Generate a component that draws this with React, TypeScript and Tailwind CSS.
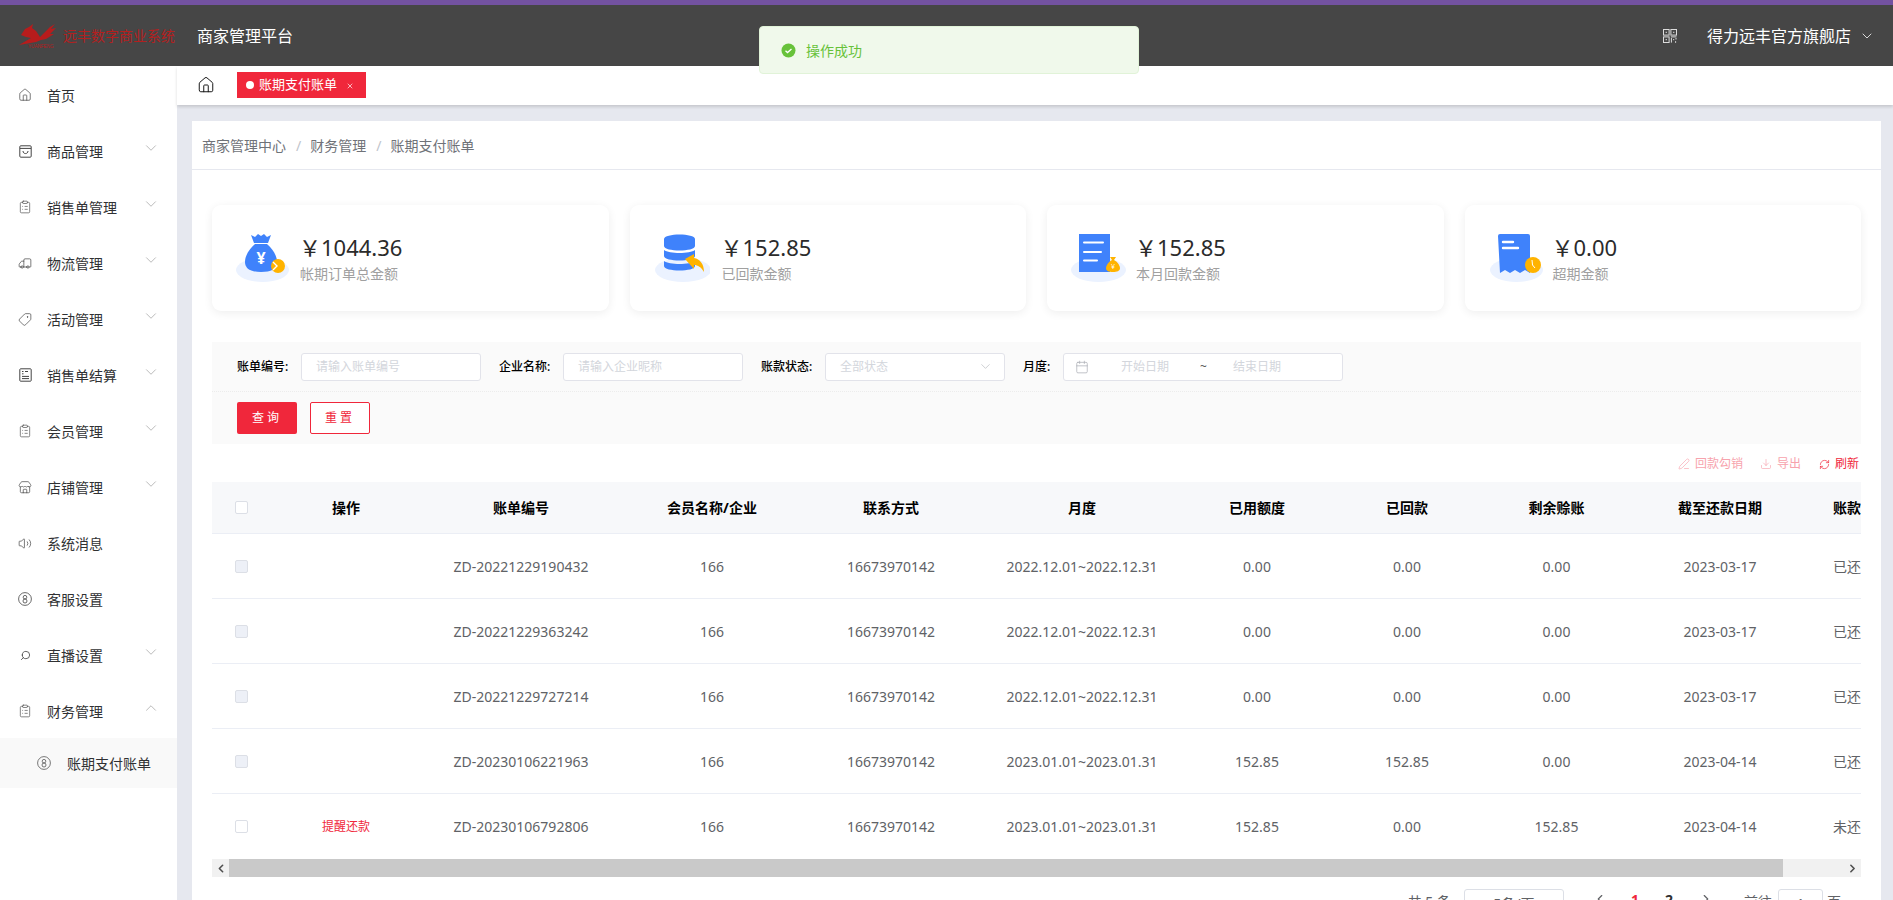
import { ReactNode } from 'react';
import {
    Calendar, ChevronDown, ChevronLeft, ChevronRight, ChevronUp, ClipboardList, Download,
    Home, PenLine, RefreshCw, Search, Store, Tag, Truck, Volume2, X,
} from 'lucide-react';

const Face = ({ size = 14 }: { size?: number }) => (
    <svg width={size} height={size} viewBox="0 0 14 14" fill="none" stroke="currentColor" strokeWidth="0.8">
        <circle cx="7" cy="7" r="6.4" />
        <circle cx="7" cy="5.2" r="1.8" />
        <circle cx="7" cy="9" r="2" />
    </svg>
);

const BoxIcon = () => (
    <svg width="13" height="13" viewBox="0 0 13 13" fill="none" stroke="currentColor" strokeWidth="1">
        <rect x="0.8" y="0.8" width="11.4" height="11.4" rx="1" />
        <path d="M1 3.4h11" />
        <path d="M4 6c0 3.4 5 3.4 5 0" />
    </svg>
);

const ListDocIcon = () => (
    <svg width="13" height="14" viewBox="0 0 13 14" fill="none" stroke="currentColor" strokeWidth="1">
        <rect x="0.8" y="0.8" width="11.4" height="12.4" rx="0.8" />
        <path d="M3 3.5h1.5M3 5.8h1.5M3 8.4h7M3 10.6h7M6 3.5h3" />
    </svg>
);

const QrIcon = () => (
    <svg width="14" height="14" viewBox="0 0 14 14" fill="none" stroke="#dddddd" strokeWidth="1">
        <rect x="0.5" y="0.5" width="5.6" height="5.6" />
        <rect x="7.9" y="0.5" width="5.6" height="5.6" />
        <rect x="0.5" y="7.9" width="5.6" height="5.6" />
        <path d="M2.6 3.3h1.4M10 3.3h1.4M2.6 10.7h1.4" />
        <path d="M7.9 7.9h5.6M8.4 9v4.6M10.7 10v1.2M13 9v1.5M12.6 12.2v1.6" />
    </svg>
);

const menu: { label: string; icon: ReactNode; arrow?: 'down' | 'up' }[] = [
    { label: '首页', icon: <Home size={14} strokeWidth={1.2} /> },
    { label: '商品管理', icon: <BoxIcon />, arrow: 'down' },
    { label: '销售单管理', icon: <ClipboardList size={16} strokeWidth={1.1} />, arrow: 'down' },
    { label: '物流管理', icon: <Truck size={15} strokeWidth={1.2} className="-scale-x-100" />, arrow: 'down' },
    { label: '活动管理', icon: <Tag size={15} strokeWidth={1.2} className="rotate-90" />, arrow: 'down' },
    { label: '销售单结算', icon: <ListDocIcon />, arrow: 'down' },
    { label: '会员管理', icon: <ClipboardList size={16} strokeWidth={1.1} />, arrow: 'down' },
    { label: '店铺管理', icon: <Store size={15} strokeWidth={1.2} />, arrow: 'down' },
    { label: '系统消息', icon: <Volume2 size={15} strokeWidth={1.2} />, },
    { label: '客服设置', icon: <Face /> },
    { label: '直播设置', icon: <Search size={11} strokeWidth={1.8} className="-scale-x-100" />, arrow: 'down' },
    { label: '财务管理', icon: <ClipboardList size={16} strokeWidth={1.1} />, arrow: 'up' },
];

const rows = [
    { id: 'ZD-20221229190432', range: '2022.12.01~2022.12.31', used: '0.00', paid: '0.00', left: '0.00', due: '2023-03-17', state: '已还款' },
    { id: 'ZD-20221229363242', range: '2022.12.01~2022.12.31', used: '0.00', paid: '0.00', left: '0.00', due: '2023-03-17', state: '已还款' },
    { id: 'ZD-20221229727214', range: '2022.12.01~2022.12.31', used: '0.00', paid: '0.00', left: '0.00', due: '2023-03-17', state: '已还款' },
    { id: 'ZD-20230106221963', range: '2023.01.01~2023.01.31', used: '152.85', paid: '152.85', left: '0.00', due: '2023-04-14', state: '已还款' },
    { id: 'ZD-20230106792806', range: '2023.01.01~2023.01.31', used: '152.85', paid: '0.00', left: '152.85', due: '2023-04-14', state: '未还款', remind: true },
];

const heads = ['操作', '账单编号', '会员名称/企业', '联系方式', '月度', '已用额度', '已回款', '剩余赊账', '截至还款日期'];

const gridCols = 'grid grid-cols-[58px_152px_198px_184px_174px_208px_142px_158px_141px_186px_85px] w-[1686px]';

const BagIcon = () => (
    <svg width="56" height="50" viewBox="0 0 56 50">
        <ellipse cx="26.5" cy="37" rx="26.5" ry="12" fill="#ebf2ff" />
        <path d="M15 2l4 2 3-3 3 2 3-2 3 3 4-2-3 8H18z" fill="#3f82fb" />
        <path d="M19 11h12c6 5 10 12 10 18 0 7-6 10-16 10S9 36 9 29c0-6 4-13 10-18z" fill="#3f82fb" />
        <text x="25" y="31" textAnchor="middle" fontSize="16" fontWeight="700" fill="#fff">¥</text>
        <circle cx="42" cy="33" r="7" fill="#ffb300" />
        <path d="M37 29l4 4-4 4" stroke="#fff" strokeWidth="1.4" fill="none" />
    </svg>
);

const DbIcon = () => (
    <svg width="56" height="50" viewBox="0 0 56 50">
        <ellipse cx="29" cy="37" rx="28" ry="12" fill="#ebf2ff" />
        <path d="M10 6c0-6 31-6 31 0v7c0 6-31 6-31 0z" fill="#3f82fb" />
        <path d="M10 17c5 4 26 4 31 0v6c0 6-31 6-31 0z" fill="#3f82fb" />
        <path d="M10 28c5 4 26 4 31 0v5c0 6-31 6-31 0z" fill="#3f82fb" />
        <path d="M31 26l9-5v4c6 1 10 6 10 14-3-5-6-7-10-7v4z" fill="#ffb300" />
    </svg>
);

const DocIcon = () => (
    <svg width="56" height="50" viewBox="0 0 56 50">
        <ellipse cx="27.5" cy="37" rx="27.5" ry="12" fill="#ebf2ff" />
        <rect x="8" y="1" width="31" height="38" fill="#3f82fb" />
        <path d="M13 9.5h19M13 19h17M13 27.5h13" stroke="#fff" strokeWidth="2" strokeLinecap="round" />
        <path d="M39 24h6l-2 3c4 2 6 6 6 8 0 3-3 4-7 4s-7-1-7-4c0-2 2-6 6-8z" fill="#ffb300" />
        <text x="42" y="36" textAnchor="middle" fontSize="7" fill="#fff">¥</text>
    </svg>
);

const ReceiptIcon = () => (
    <svg width="56" height="50" viewBox="0 0 56 50">
        <ellipse cx="27.5" cy="37" rx="26.5" ry="12" fill="#ebf2ff" />
        <path d="M9 3a2 2 0 0 1 2-2h28a2 2 0 0 1 2 2v37l-5-3-5 3-5-3-5 3-5-3-5 3z" fill="#3f82fb" />
        <path d="M14 9h10M14 15h15" stroke="#fff" strokeWidth="2.4" strokeLinecap="round" />
        <circle cx="44" cy="32" r="8" fill="#ffb300" />
        <path d="M43 27l.5 5 2.5 3" stroke="#fff" strokeWidth="1" fill="none" />
    </svg>
);

const stats = [
    { value: '1044.36', label: '帐期订单总金额', icon: <BagIcon />, gap: 'ml-[8px]' },
    { value: '152.85', label: '已回款金额', icon: <DbIcon />, gap: 'ml-[12px]' },
    { value: '152.85', label: '本月回款金额', icon: <DocIcon />, gap: 'ml-[9px]' },
    { value: '0.00', label: '超期金额', icon: <ReceiptIcon />, gap: 'ml-[8px]' },
];

const inputBox = 'flex items-center h-[28px] w-[180px] bg-white border border-[#e2e3ea] rounded-[3px] text-[12px] text-[#d3d6dc] pl-[14px]';
const filterLabel = 'text-[12px] font-medium text-black whitespace-nowrap';

export default function App() {
    return (
        <div className="relative flex flex-col w-[1893px] h-[900px] overflow-hidden bg-[#e6e8ef] text-[14px] text-[#303133] font-['Noto_Sans','Noto_Sans_CJK_SC',sans-serif]">
            <header className="flex items-center shrink-0 h-[66px] border-t-[5px] border-[#7352a1] bg-[#464646] text-white">
                <div className="flex items-center w-[197px] pl-[19px]">
                    <svg width="38" height="24" viewBox="0 0 38 24" fill="#b71c1c">
                        <path d="M2 11L6 5 10 3 14 0 13 4 17 7 19 10 21 13 31 3 36 0 32 5 37 4 31 10 35 10 27 15 22 16 17 18 0 21 12 14 7 13z" />
                        <text x="9" y="23.5" fontSize="4.6" fontFamily="'Liberation Sans', sans-serif" fill="#b71c1c">YUANFENG</text>
                    </svg>
                    <span className="ml-[6px] text-[14px] text-[#b3201f] whitespace-nowrap">远丰数字商业系统</span>
                </div>
                <span className="text-[16px]">商家管理平台</span>
                <div className="flex items-center ml-auto pr-[18px]">
                    <QrIcon />
                    <span className="ml-[30px] text-[16px] whitespace-nowrap">得力远丰官方旗舰店</span>
                    <ChevronDown size={16} strokeWidth={1.2} className="ml-[8px]" />
                </div>
            </header>

            <div className="absolute top-[26px] left-[759px] flex items-center w-[380px] h-[48px] pl-[21px] rounded-[4px] border border-[#e1f3d8] bg-[#f0f9eb] text-[#67c23a] z-20">
                <svg width="15" height="15" viewBox="0 0 15 15">
                    <circle cx="7.5" cy="7.5" r="7" fill="#67c23a" />
                    <path d="M4.5 7.8l2 1.8 4-3.6" stroke="#fff" strokeWidth="1.3" fill="none" />
                </svg>
                <span className="ml-[10px]">操作成功</span>
            </div>

            <div className="flex flex-1 min-h-0">
                <aside className="w-[177px] shrink-0 bg-white pt-[1px]">
                    {menu.map((m) => (
                        <div key={m.label} className="relative flex items-center h-[56px] pl-[18px] pr-[20px]">
                            <span className="flex justify-center w-[14px] text-[#444444]">{m.icon}</span>
                            <span className="ml-[15px] whitespace-nowrap">{m.label}</span>
                            {m.arrow === 'down' && <ChevronDown size={18} strokeWidth={0.9} className="absolute left-[142px] top-[16px] text-[#9a9a9a]" />}
                            {m.arrow === 'up' && <ChevronUp size={18} strokeWidth={0.9} className="absolute left-[142px] top-[16px] text-[#9a9a9a]" />}
                        </div>
                    ))}
                    <div className="flex items-center h-[50px] -mt-[1px] pl-[37px] bg-[#f9f9f9]">
                        <span className="text-[#555555]"><Face /></span>
                        <span className="ml-[16px] whitespace-nowrap">账期支付账单</span>
                    </div>
                </aside>

                <main className="flex flex-col flex-1 min-w-0">
                    <div className="flex items-start shrink-0 h-[39px] pt-[6px] pl-[20px] bg-white shadow-[0_2px_3px_rgba(0,0,0,0.14)] relative z-10">
                        <Home size={18} strokeWidth={1.3} className="mt-[4px] text-[#111111]" />
                        <div className="flex items-center w-[129px] h-[26px] ml-[22px] pl-[9px] bg-[#f0273b] text-white">
                            <span className="w-[8px] h-[8px] rounded-full bg-white" />
                            <span className="ml-[5px] text-[13px] whitespace-nowrap">账期支付账单</span>
                            <X size={8} strokeWidth={2} className="ml-[9px] mt-[2px]" />
                        </div>
                    </div>

                    <div className="ml-[15px] mr-[12px] mt-[16px] bg-white">
                        <div className="flex items-center h-[49px] pl-[10px] pt-[1px] border-b border-[#e6e8ef] text-[#6f7278]">
                            <span>商家管理中心</span>
                            <span className="ml-[10px] mr-[9px] text-[#c0c4cc]">/</span>
                            <span>财务管理</span>
                            <span className="ml-[10px] mr-[9px] text-[#c0c4cc]">/</span>
                            <span>账期支付账单</span>
                        </div>

                        <div className="px-[20px] pt-[35px]">
                            <div className="grid grid-cols-4 gap-[21px]">
                                {stats.map((s) => (
                                    <div key={s.label} className="flex items-center h-[106px] pl-[24px] rounded-[9px] bg-white shadow-[0_2px_10px_rgba(0,0,0,0.07)]">
                                        {s.icon}
                                        <div className={s.gap}>
                                            <div className="h-[30px] -ml-[1px] -mt-[1px] text-[22px] leading-[30px] text-[#2b2b2b]">￥{s.value}</div>
                                            <div className="h-[20px] leading-[20px] mt-[2px] text-[#a0a0a0]">{s.label}</div>
                                        </div>
                                    </div>
                                ))}
                            </div>

                            <div className="mt-[31px] h-[102px] bg-[#fafafa] px-[25px]">
                                <div className="flex items-center h-[50px] -mx-[25px] px-[25px] border-b border-dotted border-[#ececec]">
                                    <span className={`${filterLabel} w-[53px]`}>账单编号:</span>
                                    <div className={`${inputBox} ml-[11px]`}>请输入账单编号</div>
                                    <span className={`${filterLabel} w-[53px] ml-[18px]`}>企业名称:</span>
                                    <div className={`${inputBox} ml-[11px]`}>请输入企业昵称</div>
                                    <span className={`${filterLabel} w-[53px] ml-[18px]`}>账款状态:</span>
                                    <div className={`${inputBox} ml-[11px] justify-between pr-[11px]`}>
                                        全部状态
                                        <ChevronDown size={15} strokeWidth={1} className="text-[#b0b3b8]" />
                                    </div>
                                    <span className={`${filterLabel} w-[29px] ml-[18px]`}>月度:</span>
                                    <div className="flex items-center h-[28px] w-[280px] ml-[11px] pl-[11px] bg-white border border-[#e2e3ea] rounded-[3px] text-[12px] text-[#d3d6dc]">
                                        <Calendar size={14} strokeWidth={1.2} className="text-[#a8abb2]" />
                                        <span className="ml-[32px]">开始日期</span>
                                        <span className="ml-[31px] text-[#555555]">~</span>
                                        <span className="ml-[26px]">结束日期</span>
                                    </div>
                                </div>
                                <div className="flex gap-[13px] pt-[10px]">
                                    <div className="flex items-center justify-center w-[60px] h-[32px] rounded-[2px] bg-[#f0273b] text-white text-[12px] tracking-[3px]">查询</div>
                                    <div className="flex items-center justify-center w-[60px] h-[32px] rounded-[2px] bg-white border border-[#f0273b] text-[#f0273b] text-[12px] tracking-[3px]">重置</div>
                                </div>
                            </div>

                            <div className="flex items-center justify-end h-[38px] pt-[2px] text-[12px]">
                                <PenLine size={12} strokeWidth={1.3} className="text-[#f7a3ad]" />
                                <span className="ml-[5px] text-[#f7a3ad]">回款勾销</span>
                                <Download size={12} strokeWidth={1.3} className="ml-[17px] text-[#f7a3ad]" />
                                <span className="ml-[5px] text-[#f7a3ad]">导出</span>
                                <RefreshCw size={11} strokeWidth={1.5} className="ml-[18px] text-[#f0273b]" />
                                <span className="ml-[5px] mr-[2px] text-[#f0273b]">刷新</span>
                            </div>

                            <div className="overflow-hidden">
                                <div className={`${gridCols} items-center h-[52px] bg-[#f7f8fa] border-b border-[#ebeef5] font-bold text-black`}>
                                    <span className="justify-self-center w-[13px] h-[13px] rounded-[2px] border border-[#dcdfe6] bg-white" />
                                    {heads.map((h) => (
                                        <span key={h} className="text-center whitespace-nowrap">{h}</span>
                                    ))}
                                    <span className="pl-[20px] whitespace-nowrap">账款状态</span>
                                </div>
                                {rows.map((r, i) => (
                                    <div key={r.id} className={`${gridCols} items-center h-[65px] text-[#606266] ${i < rows.length - 1 ? 'border-b border-[#ebeef5]' : ''}`}>
                                        <span className={`justify-self-center w-[13px] h-[13px] rounded-[2px] border border-[#dcdfe6] ${r.remind ? 'bg-white' : 'bg-[#edf0f7]'}`} />
                                        <span className="text-center text-[12px] text-[#f0273b]">{r.remind ? '提醒还款' : ''}</span>
                                        <span className="text-center">{r.id}</span>
                                        <span className="text-center">166</span>
                                        <span className="text-center">16673970142</span>
                                        <span className="text-center">{r.range}</span>
                                        <span className="text-center">{r.used}</span>
                                        <span className="text-center">{r.paid}</span>
                                        <span className="text-center">{r.left}</span>
                                        <span className="text-center">{r.due}</span>
                                        <span className="pl-[20px] whitespace-nowrap">{r.state}</span>
                                    </div>
                                ))}
                            </div>

                            <div className="flex items-center h-[18px] bg-[#f1f1f1]">
                                <ChevronLeft size={13} strokeWidth={3} className="ml-[2px] w-[14px] text-[#505050]" />
                                <div className="w-[1554px] h-full ml-[1px] bg-[#c9c9c9]" />
                                <ChevronRight size={13} strokeWidth={3} className="ml-auto mr-[2px] text-[#505050]" />
                            </div>

                            <div className="flex items-center justify-end h-[28px] mt-[12px] text-[#606266]">
                                <span className="-mt-[4px]">共 5 条</span>
                                <div className="flex items-center justify-center w-[100px] h-[28px] ml-[13px] rounded-[3px] border border-[#dcdfe6]">5条/页</div>
                                <ChevronLeft size={14} className="ml-[29px] -mt-[8px]" />
                                <span className="ml-[24px] -mt-[8px] font-bold text-[#f0273b]">1</span>
                                <span className="ml-[26px] -mt-[8px] font-bold text-[#303133]">2</span>
                                <ChevronRight size={14} className="ml-[26px] -mt-[8px]" />
                                <span className="ml-[31px] -mt-[4px]">前往</span>
                                <div className="flex items-center justify-center w-[45px] h-[28px] ml-[6px] rounded-[3px] border border-[#dcdfe6]">1</div>
                                <span className="ml-[4px] mr-[20px] -mt-[4px]">页</span>
                            </div>
                        </div>
                    </div>
                </main>
            </div>
        </div>
    );
}
